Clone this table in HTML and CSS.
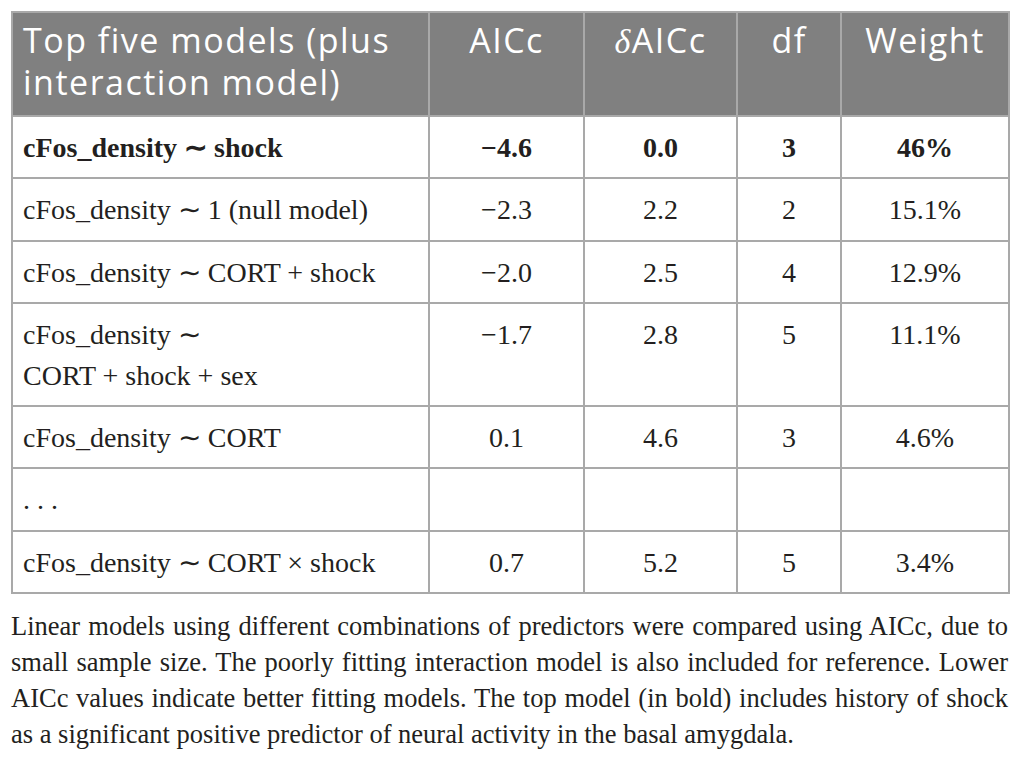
FILE: index.html
```html
<!DOCTYPE html>
<html lang="en">
<head>
    <meta charset="UTF-8">
    <meta name="viewport" content="width=device-width, initial-scale=1.0">
    <title>Model comparison</title>
    <link rel="stylesheet" href="styles.css">
</head>
<body>
    <div class="container">
        <table class="models">
            <colgroup>
                <col class="col-model">
                <col class="col-aicc">
                <col class="col-delta">
                <col class="col-df">
                <col class="col-weight">
            </colgroup>
            <thead>
                <tr>
                    <th class="left">Top five models (plus interaction model)</th>
                    <th>AICc</th>
                    <th><span class="delta">δ</span>AICc</th>
                    <th>df</th>
                    <th>Weight</th>
                </tr>
            </thead>
            <tbody>
                <tr class="best">
                    <td class="left">cFos_density ∼ shock</td>
                    <td>−4.6</td>
                    <td>0.0</td>
                    <td>3</td>
                    <td>46%</td>
                </tr>
                <tr>
                    <td class="left">cFos_density ∼ 1 (null model)</td>
                    <td>−2.3</td>
                    <td>2.2</td>
                    <td>2</td>
                    <td>15.1%</td>
                </tr>
                <tr>
                    <td class="left">cFos_density ∼ CORT + shock</td>
                    <td>−2.0</td>
                    <td>2.5</td>
                    <td>4</td>
                    <td>12.9%</td>
                </tr>
                <tr>
                    <td class="left">cFos_density ∼<br>CORT + shock + sex</td>
                    <td>−1.7</td>
                    <td>2.8</td>
                    <td>5</td>
                    <td>11.1%</td>
                </tr>
                <tr>
                    <td class="left">cFos_density ∼ CORT</td>
                    <td>0.1</td>
                    <td>4.6</td>
                    <td>3</td>
                    <td>4.6%</td>
                </tr>
                <tr>
                    <td class="left">. . .</td>
                    <td></td>
                    <td></td>
                    <td></td>
                    <td></td>
                </tr>
                <tr>
                    <td class="left">cFos_density ∼ CORT × shock</td>
                    <td>0.7</td>
                    <td>5.2</td>
                    <td>5</td>
                    <td>3.4%</td>
                </tr>
            </tbody>
        </table>
        <p class="caption">Linear models using different combinations of predictors were compared using AICc, due to small sample size. The poorly fitting interaction model is also included for reference. Lower AICc values indicate better fitting models. The top model (in bold) includes history of shock as a significant positive predictor of neural activity in the basal amygdala.</p>
    </div>
</body>
</html>
```

FILE: styles.css
```css
:root {
    --head-bg: #808080;
    --rule: #a9a9a9;
    --ink: #231f20;
}

* {
    margin: 0;
    padding: 0;
    box-sizing: border-box;
}

body {
    background: #fff;
    color: var(--ink);
    font-family: "Liberation Serif", serif;
}

.container {
    width: 1020px;
    padding: 11px 12px 0 11px;
}

.models {
    width: 997px;
    border-collapse: collapse;
    table-layout: fixed;
    border: 2px solid var(--rule);
}

.col-model { width: 417px; }
.col-aicc { width: 155px; }
.col-delta { width: 153px; }
.col-df { width: 104px; }
.col-weight { width: 168px; }

.models th {
    background: var(--head-bg);
    color: #fff;
    font-family: "Open Sans", sans-serif;
    font-weight: 400;
    font-size: 34px;
    letter-spacing: 1.5px;
    line-height: 42px;
    padding: 6px 10px 12px;
    text-align: center;
    vertical-align: top;
    border: 2px solid var(--rule);
}

.models th .delta {
    font-family: "Liberation Serif", serif;
    font-style: italic;
}

.models td {
    font-size: 28px;
    line-height: 41px;
    padding: 10px 10px 9.3px;
    text-align: center;
    vertical-align: top;
    border: 2px solid var(--rule);
}

.models .left {
    text-align: left;
}

.models .best td {
    font-weight: 700;
}

.caption {
    margin-top: 14px;
    font-size: 26.5px;
    line-height: 36px;
    text-align: justify;
    width: 997px;
}
```
